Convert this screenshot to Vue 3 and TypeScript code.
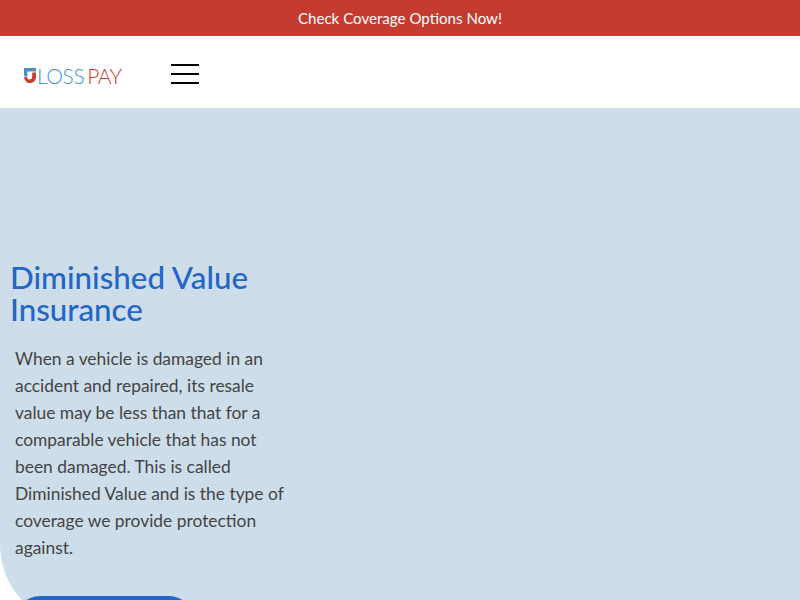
<script setup lang="ts">
const title: string = 'Diminished Value Insurance'
</script>

<template>
  <div class="page">
    <div class="promo">Check Coverage Options Now!</div>
    <header class="nav">
      <a class="logo">
        <svg class="mark" width="12" height="15" viewBox="0 0 12 15">
          <path d="M0 0H12V3.6H3.4V9.2L0 7.6Z" fill="#4a90c8" />
          <path d="M0 8.4L3 9.4C3.6 10.9 4.6 11.6 5.8 11.6C7.4 11.6 8.2 10.6 8.2 8.8V4.4H12V8.8C12 12.6 9.6 15 6 15C2.6 15 0.4 12.4 0 8.4Z" fill="#c63b2f" />
        </svg>
        <span class="loss">LOSS</span><span class="pay">PAY</span>
      </a>
      <button class="burger" aria-label="Menu"><i></i><i></i><i></i></button>
    </header>
    <section class="hero">
      <div class="copy">
        <h1>{{ title }}</h1>
        <p>When a vehicle is damaged in an accident and repaired, its resale value may be less than that for a comparable vehicle that has not been damaged. This is called Diminished Value and is the type of coverage we provide protection against.</p>
        <a class="cta" aria-hidden="true"></a>
      </div>
    </section>
  </div>
</template>

<style>
html, body { margin: 0; overflow: hidden; background: #fff; }
</style>

<style scoped>
.page { width: 800px; height: 600px; overflow: hidden; font-family: Lato, "Open Sans", sans-serif; }
.promo { height: 36px; background: #c43b2f; color: #fff; font-size: 15.1px; line-height: 36px; text-align: center; }
.nav { height: 72px; background: #fff; display: flex; align-items: center; padding-left: 24px; gap: 50px; }
.logo { display: flex; align-items: center; width: 97px; font-size: 21px; font-weight: 300; line-height: 1; margin-top: 7px; }
.mark { flex: none; margin-right: 1px; }
.loss { color: #4a96d2; letter-spacing: -0.4px; }
.pay { color: #c63b2f; margin-left: 3px; letter-spacing: -0.6px; }
.burger { width: 28px; height: 20px; padding: 0; border: 0; background: none; display: flex; flex-direction: column; justify-content: space-between; margin-top: 3px; }
.burger i { display: block; height: 2px; background: #000; }
.hero { height: 517px; background: #cddde9; border-bottom-left-radius: 80px; padding-top: 153px; box-sizing: border-box; }
.copy { width: 300px; }
h1 { margin: 0 0 20px 10px; color: #2166c8; font-size: 31.3px; line-height: 32px; font-weight: 500; }
p { margin: 0 0 35px 15px; width: 272px; color: #444; font-size: 17.4px; line-height: 27px; }
.cta { display: block; margin-left: 15px; width: 179px; height: 50px; border-radius: 25px; background: #2166c8; }
</style>
